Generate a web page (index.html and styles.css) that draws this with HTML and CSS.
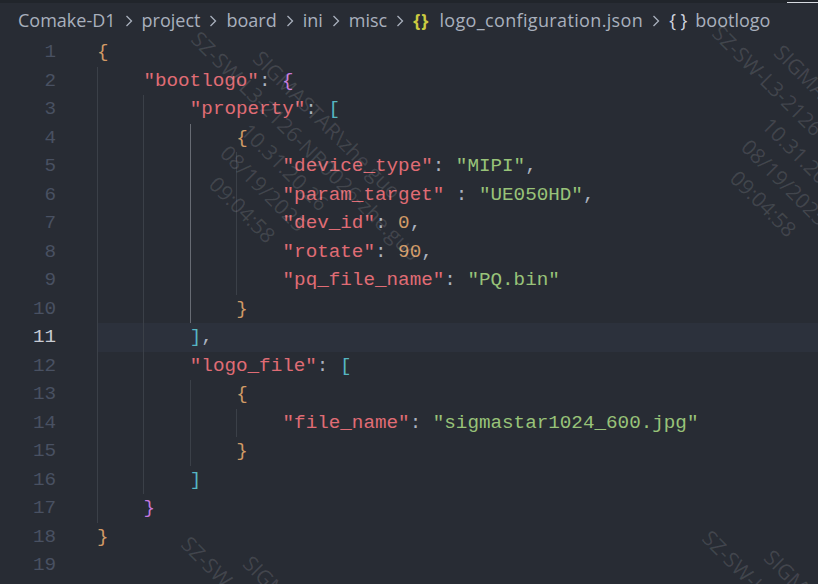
FILE: index.html
```html
<!DOCTYPE html>
<html lang="en">
<head>
  <meta charset="UTF-8" />
  <title>logo_configuration.json</title>
  <link rel="stylesheet" href="styles.css">
</head>
<body>
  <div class="tab-edge"><span class="tab-active"></span></div>

  <div class="breadcrumbs">
    <span class="crumb">Comake-D1</span>
    <svg class="chev" viewBox="0 0 8 14"><polyline points="1.5,2 6.5,7 1.5,12" /></svg>
    <span class="crumb">project</span>
    <svg class="chev" viewBox="0 0 8 14"><polyline points="1.5,2 6.5,7 1.5,12" /></svg>
    <span class="crumb">board</span>
    <svg class="chev" viewBox="0 0 8 14"><polyline points="1.5,2 6.5,7 1.5,12" /></svg>
    <span class="crumb">ini</span>
    <svg class="chev" viewBox="0 0 8 14"><polyline points="1.5,2 6.5,7 1.5,12" /></svg>
    <span class="crumb">misc</span>
    <svg class="chev" viewBox="0 0 8 14"><polyline points="1.5,2 6.5,7 1.5,12" /></svg>
    <span class="file-icon">{}</span>
    <span class="crumb crumb-file">logo_configuration.json</span>
    <svg class="chev" viewBox="0 0 8 14"><polyline points="1.5,2 6.5,7 1.5,12" /></svg>
    <span class="symbol-icon">{ }</span>
    <span class="crumb">bootlogo</span>
  </div>

  <div class="editor">
    <div class="line"><span class="ln">1</span><span class="code"><span class="b1">{</span></span></div>
    <div class="line"><span class="ln">2</span><span class="code"><span class="ind"></span><span class="key">"bootlogo"</span><span class="p">: </span><span class="b2">{</span></span></div>
    <div class="line"><span class="ln">3</span><span class="code"><span class="ind"></span><span class="ind"></span><span class="key">"property"</span><span class="p">: </span><span class="b3">[</span></span></div>
    <div class="line"><span class="ln">4</span><span class="code"><span class="ind"></span><span class="ind"></span><span class="ind active"></span><span class="b1">{</span></span></div>
    <div class="line"><span class="ln">5</span><span class="code"><span class="ind"></span><span class="ind"></span><span class="ind active"></span><span class="ind"></span><span class="key">"device_type"</span><span class="p">: </span><span class="str">"MIPI"</span><span class="p">,</span></span></div>
    <div class="line"><span class="ln">6</span><span class="code"><span class="ind"></span><span class="ind"></span><span class="ind active"></span><span class="ind"></span><span class="key">"param_target"</span><span class="p"> : </span><span class="str">"UE050HD"</span><span class="p">,</span></span></div>
    <div class="line"><span class="ln">7</span><span class="code"><span class="ind"></span><span class="ind"></span><span class="ind active"></span><span class="ind"></span><span class="key">"dev_id"</span><span class="p">: </span><span class="num">0</span><span class="p">,</span></span></div>
    <div class="line"><span class="ln">8</span><span class="code"><span class="ind"></span><span class="ind"></span><span class="ind active"></span><span class="ind"></span><span class="key">"rotate"</span><span class="p">: </span><span class="num">90</span><span class="p">,</span></span></div>
    <div class="line"><span class="ln">9</span><span class="code"><span class="ind"></span><span class="ind"></span><span class="ind active"></span><span class="ind"></span><span class="key">"pq_file_name"</span><span class="p">: </span><span class="str">"PQ.bin"</span></span></div>
    <div class="line"><span class="ln">10</span><span class="code"><span class="ind"></span><span class="ind"></span><span class="ind active"></span><span class="b1">}</span></span></div>
    <div class="line current"><span class="ln">11</span><span class="code"><span class="ind"></span><span class="ind"></span><span class="b3">]</span><span class="p">,</span></span></div>
    <div class="line"><span class="ln">12</span><span class="code"><span class="ind"></span><span class="ind"></span><span class="key">"logo_file"</span><span class="p">: </span><span class="b3">[</span></span></div>
    <div class="line"><span class="ln">13</span><span class="code"><span class="ind"></span><span class="ind"></span><span class="ind"></span><span class="b1">{</span></span></div>
    <div class="line"><span class="ln">14</span><span class="code"><span class="ind"></span><span class="ind"></span><span class="ind"></span><span class="ind"></span><span class="key">"file_name"</span><span class="p">: </span><span class="str">"sigmastar1024_600.jpg"</span></span></div>
    <div class="line"><span class="ln">15</span><span class="code"><span class="ind"></span><span class="ind"></span><span class="ind"></span><span class="b1">}</span></span></div>
    <div class="line"><span class="ln">16</span><span class="code"><span class="ind"></span><span class="ind"></span><span class="b3">]</span></span></div>
    <div class="line"><span class="ln">17</span><span class="code"><span class="ind"></span><span class="b2">}</span></span></div>
    <div class="line"><span class="ln">18</span><span class="code"><span class="b1">}</span></span></div>
    <div class="line"><span class="ln">19</span><span class="code"></span></div>
  </div>

  <!-- watermark overlay -->
  <div class="watermarks">
    <div class="wm wm-a">SIGMASTAR\zhe.guo
SZ-SW-L3-2126-NB0026-zhe.guo
10.31.20.26
08/19/2025
09:04:58</div>
    <div class="wm wm-b">SIGMASTAR\zhe.guo
SZ-SW-L3-2126-NB0026-zhe.guo
10.31.20.26
08/19/2025
09:04:58</div>
    <div class="wm wm-c">SIGMASTAR\zhe.guo
SZ-SW-L3-2126-NB0026-zhe.guo
10.31.20.26
08/19/2025
09:04:58</div>
    <div class="wm wm-d">SIGMASTAR\zhe.guo
SZ-SW-L3-2126-NB0026-zhe.guo
10.31.20.26
08/19/2025
09:04:58</div>
  </div>
</body>
</html>
```

FILE: styles.css
```css
body {
  margin: 0;
  width: 818px;
  height: 584px;
  overflow: hidden;
  position: relative;
  background-color: #282c34;
  color: #abb2bf;
}

.tab-edge {
  height: 3px;
  background-color: #21252b;
  display: flex;
  justify-content: flex-end;
  align-items: flex-end;
}

.tab-active {
  width: 31px;
  height: 1px;
  background-color: #d7dae0;
}

.breadcrumbs {
  height: 34px;
  display: flex;
  align-items: center;
  padding-left: 18px;
  font-family: 'Open Sans', 'Noto Sans', sans-serif;
  font-size: 18px;
  color: #a9b0bd;
  white-space: nowrap;
}

.crumb-file {
  letter-spacing: 0.35px;
}

.chev {
  width: 8px;
  height: 14px;
  margin: 2px 9px 0 9px;
  fill: none;
  stroke: #a9b0bd;
  stroke-width: 1.3;
}

.file-icon {
  color: #cbcb41;
  font-weight: bold;
  margin-right: 10px;
  letter-spacing: 1px;
}

.symbol-icon {
  color: #d4d8e0;
  margin-right: 8px;
}

.editor {
  padding-top: 1px;
  font-family: 'Liberation Mono', 'DejaVu Sans Mono', monospace;
  font-size: 19.25px;
  line-height: 28.5px;
}

.line {
  display: flex;
  height: 28.5px;
  white-space: pre;
}

.ln {
  width: 56px;
  flex-shrink: 0;
  text-align: right;
  color: #495162;
}

.code {
  flex: 1;
  margin-left: 41px;
}

.current .code {
  background-color: #2c313c;
}

.current .ln {
  color: #c8ccd4;
}

.ind {
  display: inline-block;
  width: 46.4px;
  height: 28.5px;
  vertical-align: top;
  box-sizing: border-box;
  border-left: 1px solid #3b4048;
}

.ind.active {
  border-left-color: #676b73;
}

.key { color: #e06c75; }
.str { color: #98c379; }
.num { color: #d19a66; }
.p { color: #abb2bf; }
.b1 { color: #d19a66; }
.b2 { color: #c678dd; }
.b3 { color: #56b6c2; }

.watermarks {
  position: absolute;
  top: 0;
  left: 0;
  right: 0;
  bottom: 0;
  overflow: hidden;
  pointer-events: none;
}

.wm {
  position: absolute;
  transform: translate(-50%, -50%) rotate(45deg);
  white-space: pre;
  text-align: center;
  font-family: 'Open Sans', 'Noto Sans', sans-serif;
  font-size: 21px;
  line-height: 30px;
  color: rgba(255, 255, 255, 0.12);
}

.wm-a { left: 285px; top: 167px; }
.wm-b { left: 806px; top: 161px; }
.wm-c { left: 275px; top: 672px; }
.wm-d { left: 796px; top: 666px; }
```
